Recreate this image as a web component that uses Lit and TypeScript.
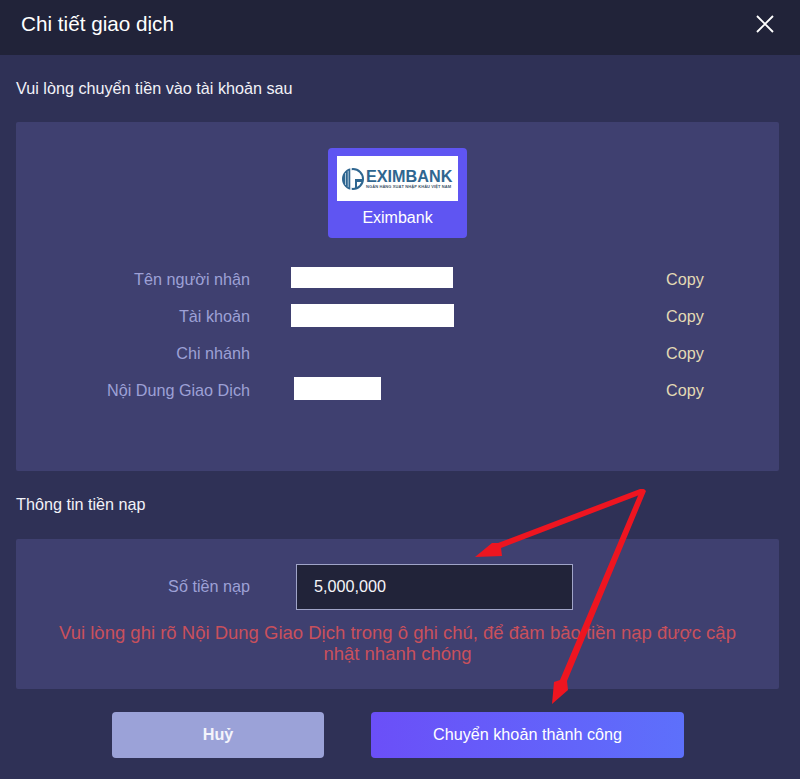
import { LitElement, html, css } from "lit";
import { customElement } from "lit/decorators.js";

const rows: { label: string; value: number; inset: number; lift: number; height: number }[] = [
  { label: "Tên người nhận", value: 162, inset: 0, lift: 5, height: 21 },
  { label: "Tài khoản", value: 163, inset: 0, lift: 3, height: 23 },
  { label: "Chi nhánh", value: 0, inset: 0, lift: 0, height: 0 },
  { label: "Nội Dung Giao Dịch", value: 87, inset: 3, lift: 5, height: 23 },
];

@customElement("app-root")
export class AppRoot extends LitElement {
  static styles = css`
    :host {
      display: block;
      position: relative;
      width: 800px;
      height: 779px;
      overflow: hidden;
      background: #2f3156;
      font-family: "Liberation Sans", Arial, sans-serif;
      color: #fff;
    }
    .header {
      height: 55px;
      background: #212339;
      display: flex;
      align-items: center;
      justify-content: space-between;
      padding: 0 25px 7px 21px;
      box-sizing: border-box;
      font-size: 20.7px;
    }
    .close { display: block; }
    .content { padding: 0 21px 0 16px; }
    .section-title {
      font-size: 16.2px;
      line-height: 20px;
      color: #f2f2f8;
    }
    .first { margin-top: 23px; }
    .second { margin-top: 23px; }
    .card { background: #3f4070; border-radius: 2px; }
    .bank-card {
      height: 349px;
      margin-top: 24px;
      padding-top: 26px;
      box-sizing: border-box;
    }
    .tile {
      width: 139px;
      height: 90px;
      padding: 8px 9px 0;
      box-sizing: border-box;
      margin-left: 312px;
      background: #5f55f2;
      border-radius: 4px;
      text-align: center;
      font-size: 16px;
    }
    .logo {
      height: 45px;
      background: #fff;
      display: flex;
      align-items: center;
      gap: 2px;
      padding: 0 3px 0 5px;
      box-sizing: border-box;
    }
    .logo-mark { flex: none; display: block; }
    .logo-words { display: flex; flex-direction: column; flex: 1; min-width: 0; text-align: left; }
    .logo-name {
      color: #2f6690;
      font-weight: 700;
      font-size: 16.2px;
      line-height: 14px;
      white-space: nowrap;
    }
    .logo-sub {
      margin-top: 1px;
      color: #41566b;
      font-size: 4px;
      line-height: 5px;
      font-weight: 700;
      letter-spacing: 0.1px;
      white-space: nowrap;
    }
    .tile-name { margin-top: 8px; line-height: 18px; }
    .rows { margin-top: 23px; display: flex; flex-direction: column; }
    .row {
      height: 37px;
      display: flex;
      align-items: center;
      font-size: 16.2px;
    }
    .label {
      width: 234px;
      text-align: right;
      color: #9da0d6;
      flex: none;
    }
    .value-slot { width: 416px; padding-left: 41px; box-sizing: border-box; flex: none; display: flex; }
    .mask { background: #fff; display: block; }
    .copy { color: #e3dab4; }
    .amount-card {
      height: 150px;
      margin-top: 25px;
      padding-top: 25px;
      box-sizing: border-box;
    }
    .amount-row { display: flex; align-items: center; height: 46px; }
    .amount-label {
      width: 234px;
      padding-bottom: 2px;
      text-align: right;
      color: #9da0d6;
      font-size: 16.2px;
      flex: none;
    }
    .amount-input {
      width: 277px;
      height: 46px;
      margin-left: 46px;
      padding: 0 0 2px 17px;
      box-sizing: border-box;
      background: #212339;
      border: 1px solid #a0a4c8;
      display: flex;
      align-items: center;
      font-size: 16.2px;
      color: #f4f4f8;
    }
    .warning {
      margin: 12px auto 0;
      width: 690px;
      text-align: center;
      color: #c9505c;
      font-size: 18.5px;
      line-height: 21px;
    }
    .actions {
      display: flex;
      gap: 47px;
      margin-top: 23px;
      padding-left: 96px;
    }
    .btn {
      height: 46px;
      padding-bottom: 2px;
      box-sizing: border-box;
      border-radius: 4px;
      display: flex;
      align-items: center;
      justify-content: center;
      font-size: 16.2px;
      color: #fff;
    }
    .cancel { width: 212px; background: #9ba2d8; font-weight: 700; color: #f4f4fb; }
    .confirm { width: 313px; background: linear-gradient(90deg, #6b4ff8, #5d70fb); }
    .arrows { position: absolute; inset: 0; width: 800px; height: 779px; pointer-events: none; }
  `;

  render() {
    return html`
      <div class="header">
        <span>Chi tiết giao dịch</span>
        <svg class="close" width="20" height="20" viewBox="0 0 20 20" fill="none" stroke="#fff" stroke-width="1.9">
          <path d="M2 2 L18 18 M18 2 L2 18" />
        </svg>
      </div>
      <div class="content">
        <div class="section-title first">Vui lòng chuyển tiền vào tài khoản sau</div>
        <div class="card bank-card">
          <div class="tile">
            <div class="logo">
              <svg class="logo-mark" width="22" height="22" viewBox="0 0 22 22">
                <circle cx="11" cy="11" r="10" fill="#fff" stroke="#2f6690" stroke-width="2" />
                <path d="M9 1.2 A10 10 0 0 0 9 20.8 Z" fill="#2f6690" />
                <path d="M3.5 5 V17 M6.2 2.8 V19.2" stroke="#cfe0ea" stroke-width="0.8" />
                <path d="M13 3 V11 H20 V14 H15 V20 H13 Z" fill="#2f6690" />
                <path d="M9 0 V22" stroke="#fff" stroke-width="1.4" />
              </svg>
              <div class="logo-words">
                <span class="logo-name">EXIMBANK</span>
                <span class="logo-sub">NGÂN HÀNG XUẤT NHẬP KHẨU VIỆT NAM</span>
              </div>
            </div>
            <div class="tile-name">Eximbank</div>
          </div>
          <div class="rows">
            ${rows.map(
              (r) => html`
                <div class="row">
                  <span class="label">${r.label}</span>
                  <span class="value-slot">
                    ${r.value
                      ? html`<span
                          class="mask"
                          style="width:${r.value}px;height:${r.height}px;margin-left:${r.inset}px;margin-bottom:${r.lift}px"
                        ></span>`
                      : ""}
                  </span>
                  <span class="copy">Copy</span>
                </div>
              `,
            )}
          </div>
        </div>
        <div class="section-title second">Thông tin tiền nạp</div>
        <div class="card amount-card">
          <div class="amount-row">
            <span class="amount-label">Số tiền nạp</span>
            <div class="amount-input">5,000,000</div>
          </div>
          <div class="warning">
            Vui lòng ghi rõ Nội Dung Giao Dịch trong ô ghi chú, để đảm bảo tiền nạp được cập nhật nhanh chóng
          </div>
        </div>
        <div class="actions">
          <div class="btn cancel">Huỷ</div>
          <div class="btn confirm">Chuyển khoản thành công</div>
        </div>
      </div>
      <svg class="arrows" viewBox="0 0 800 779">
        <path d="M644 489 L642 494 L501 548 L502 556 L475 557 L492 543 L498 543 L640 489 Z" fill="#ee1520" />
        <path d="M644 489 L646 491 L567 681 L568 690 L552 704 L554 682 L560 680 L640 491 Z" fill="#ee1520" />
      </svg>
    `;
  }
}
